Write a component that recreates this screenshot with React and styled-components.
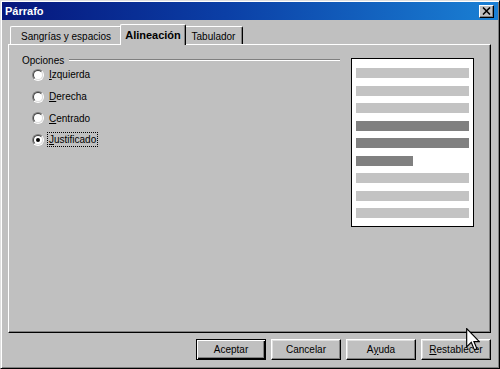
import styled, { createGlobalStyle } from "styled-components";

const GlobalStyle = createGlobalStyle`
  html, body {
    margin: 0;
    padding: 0;
    background: #c0c0c0;
  }
  body {
    font-family: "Liberation Sans", Arial, sans-serif;
    font-size: 10px;
    color: #000;
  }
`;

const Window = styled.div`
  position: relative;
  box-sizing: border-box;
  width: 500px;
  height: 369px;
  background: #c0c0c0;
  border: 1px solid;
  border-color: #dfdfdf #000 #000 #dfdfdf;
  box-shadow: inset 1px 1px #fff, inset -1px -1px #808080;
  padding: 1px;
  display: flex;
  flex-direction: column;
  overflow: hidden;
`;

const TitleBar = styled.div`
  height: 18px;
  display: flex;
  align-items: center;
  justify-content: space-between;
  padding: 0 4px 0 3px;
  background: linear-gradient(90deg, #06167c 0%, #0b3fa6 45%, #1a80d4 100%);
  color: #fff;
  font-weight: bold;
  font-size: 11px;
`;

const CloseButton = styled.div`
  box-sizing: border-box;
  width: 15px;
  height: 13px;
  background: #c0c0c0;
  border: 1px solid;
  border-color: #fff #000 #000 #fff;
  box-shadow: inset -1px -1px #808080;
  display: flex;
  align-items: center;
  justify-content: center;
`;

const Body = styled.div`
  flex: 1;
  display: flex;
  flex-direction: column;
  padding: 4px 7px 7px 6px;
`;

const TabRow = styled.div`
  display: flex;
  align-items: flex-end;
  height: 20px;
  padding-left: 2px;
  position: relative;
  z-index: 1;
`;

const Tab = styled.div`
  box-sizing: border-box;
  width: ${(p) => p.$width}px;
  height: ${(p) => (p.$active ? 21 : 18)}px;
  margin: ${(p) => (p.$active ? "0 -2px -1px -2px" : "0")};
  position: relative;
  z-index: ${(p) => (p.$active ? 2 : 1)};
  background: #c0c0c0;
  border-top: 1px solid #fff;
  border-left: 1px solid #fff;
  border-right: 1px solid #000;
  box-shadow: inset -1px 0 #808080;
  border-radius: 2px 2px 0 0;
  display: flex;
  align-items: flex-start;
  padding-top: ${(p) => (p.$active ? "4px" : "4px")};
  justify-content: center;
  font-size: ${(p) => (p.$active ? 11 : 10)}px;
  font-weight: ${(p) => (p.$active ? "bold" : "normal")};
`;

const Panel = styled.div`
  flex: 1;
  display: flex;
  background: #c0c0c0;
  border: 1px solid;
  border-color: #fff #000 #000 #fff;
  box-shadow: inset -1px -1px #808080;
`;

const LeftCol = styled.div`
  flex: 1;
  display: flex;
  flex-direction: column;
  padding: 9px 0 0 13px;
`;

const GroupHeader = styled.div`
  height: 12px;
  display: flex;
  align-items: center;
  gap: 5px;
`;

const GroupLine = styled.div`
  flex: 1;
  height: 0;
  border-top: 1px solid #808080;
  border-bottom: 1px solid #fff;
`;

const RadioList = styled.div`
  margin-top: -2px;
  padding-left: 10px;
  display: flex;
  flex-direction: column;
`;

const RadioRow = styled.div`
  height: 21.7px;
  display: flex;
  align-items: center;
  gap: 4px;
`;

const RadioOuter = styled.span`
  box-sizing: border-box;
  width: 12px;
  height: 12px;
  border-radius: 50%;
  border: 1px solid;
  border-color: #808080 #fff #fff #808080;
  display: flex;
  align-items: center;
  justify-content: center;
`;

const RadioInner = styled.span`
  box-sizing: border-box;
  width: 10px;
  height: 10px;
  border-radius: 50%;
  border: 1px solid;
  border-color: #404040 #dfdfdf #dfdfdf #404040;
  background: #fff;
  display: flex;
  align-items: center;
  justify-content: center;

  &::after {
    content: "";
    width: 4px;
    height: 4px;
    border-radius: 50%;
    background: #000;
    display: ${(p) => (p.$checked ? "block" : "none")};
  }
`;

const RadioLabel = styled.span`
  padding: 1px 1px;
  outline: ${(p) => (p.$focused ? "1px dotted #000" : "none")};
`;

const Preview = styled.div`
  box-sizing: border-box;
  width: 123px;
  height: 169px;
  margin: 13px 16px 0 11px;
  background: #fff;
  border: 1px solid #000;
  padding: 9px 4px 8px 4px;
  display: flex;
  flex-direction: column;
  justify-content: space-between;
`;

const PreviewLine = styled.div`
  height: 10px;
  width: ${(p) => (p.$short ? "57px" : "auto")};
  background: ${(p) => (p.$dark ? "#808080" : "#c3c3c3")};
`;

const ButtonRow = styled.div`
  display: flex;
  justify-content: flex-end;
  gap: 5px;
  margin-top: 6px;
`;

const Button = styled.div`
  box-sizing: border-box;
  width: 70px;
  height: 21px;
  background: #c0c0c0;
  border: 1px solid;
  border-color: ${(p) => (p.$default ? "#000" : "#fff #000 #000 #fff")};
  box-shadow: ${(p) =>
    p.$default
      ? "inset 1px 1px #fff, inset -1px -1px #000, inset -2px -2px #808080"
      : "inset -1px -1px #808080, inset 1px 1px #dfdfdf"};
  display: flex;
  align-items: center;
  justify-content: center;
  font-size: 10px;
`;

const Cursor = styled.svg`
  position: absolute;
  left: 465px;
  top: 327px;
  z-index: 5;
`;

const alignments = [
  { key: "I", rest: "zquierda" },
  { key: "D", rest: "erecha" },
  { key: "C", rest: "entrado" },
  { key: "J", rest: "ustificado", checked: true },
];

const preview = [
  {}, {}, {},
  { dark: true }, { dark: true }, { dark: true, short: true },
  {}, {}, {},
];

export default function App() {
  return (
    <>
      <GlobalStyle />
      <Window>
        <TitleBar>
          <span>Párrafo</span>
          <CloseButton>
            <svg width="9" height="8" viewBox="0 0 9 8">
              <path d="M1 0.5 L8 7.5 M8 0.5 L1 7.5" stroke="#000" strokeWidth="1.6" />
            </svg>
          </CloseButton>
        </TitleBar>

        <Body>
          <TabRow>
            <Tab $width={112}>Sangrías y espacios</Tab>
            <Tab $width={66} $active>Alineación</Tab>
            <Tab $width={59}>Tabulador</Tab>
          </TabRow>

          <Panel>
            <LeftCol>
              <GroupHeader>
                <span>Opciones</span>
                <GroupLine />
              </GroupHeader>
              <RadioList>
                {alignments.map((a) => (
                  <RadioRow key={a.key}>
                    <RadioOuter>
                      <RadioInner $checked={a.checked} />
                    </RadioOuter>
                    <RadioLabel $focused={a.checked}>
                      <u>{a.key}</u>
                      {a.rest}
                    </RadioLabel>
                  </RadioRow>
                ))}
              </RadioList>
            </LeftCol>

            <Preview>
              {preview.map((l, i) => (
                <PreviewLine key={i} $dark={l.dark} $short={l.short} />
              ))}
            </Preview>
          </Panel>

          <ButtonRow>
            <Button $default>Aceptar</Button>
            <Button>Cancelar</Button>
            <Button>
              A<u>y</u>uda
            </Button>
            <Button>
              <u>R</u>establecer
            </Button>
          </ButtonRow>
        </Body>

        <Cursor width="14" height="23" viewBox="0 0 12 20">
          <path
            d="M0.5 0.5 L0.5 16.5 L4.5 12.5 L7.2 19 L9.4 18 L6.8 11.8 L11.5 11.8 Z"
            fill="#fff"
            stroke="#000"
            strokeWidth="1"
          />
        </Cursor>
      </Window>
    </>
  );
}
